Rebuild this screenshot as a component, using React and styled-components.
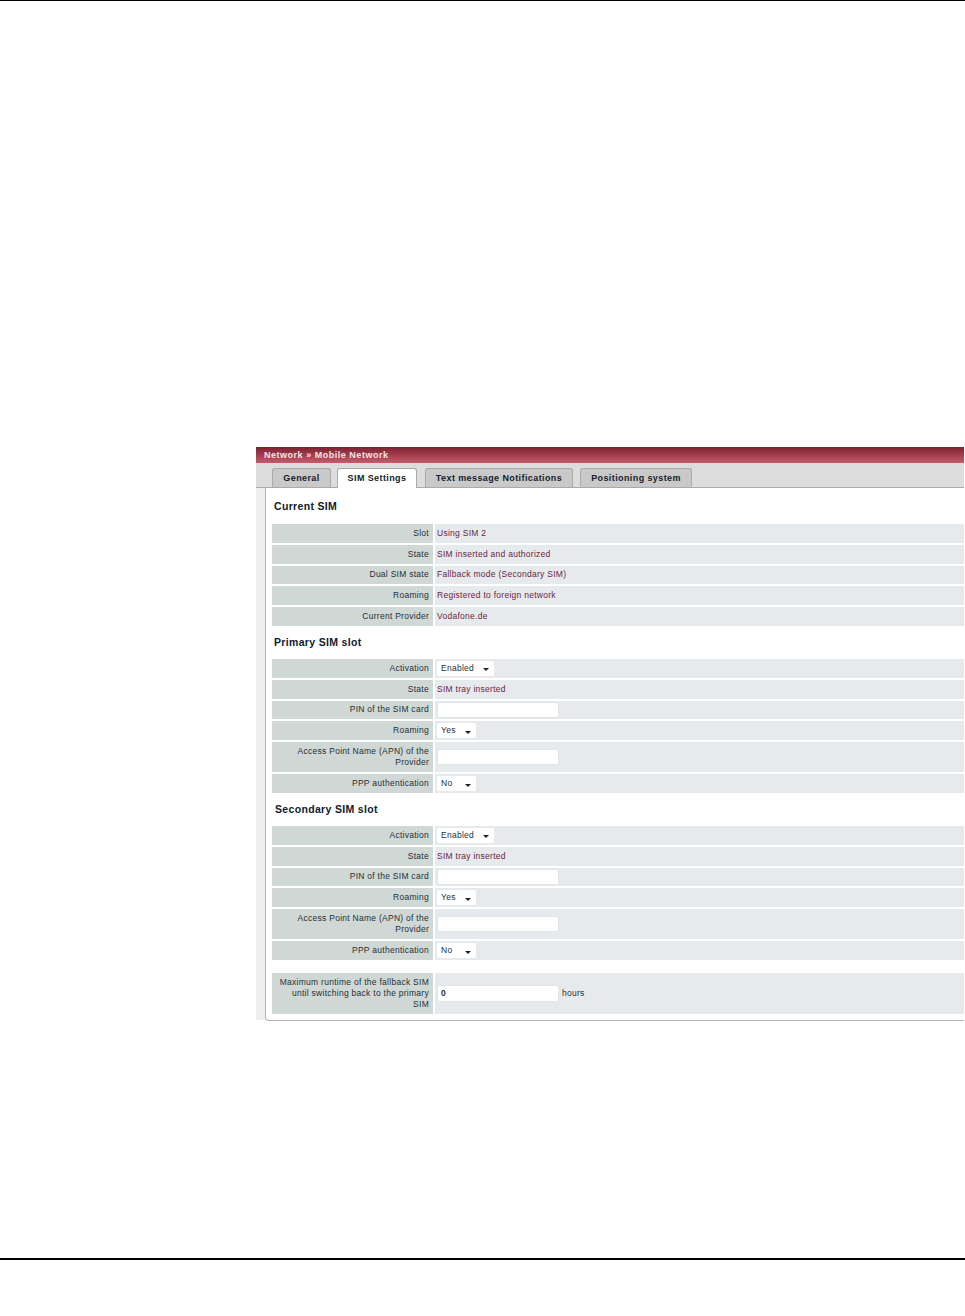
import styled, { createGlobalStyle } from "styled-components";

const GlobalStyle = createGlobalStyle`
  html, body {
    margin: 0;
    padding: 0;
    background: #ffffff;
  }
`;

const currentSim = [
  ["Slot", "Using SIM 2"],
  ["State", "SIM inserted and authorized"],
  ["Dual SIM state", "Fallback mode (Secondary SIM)"],
  ["Roaming", "Registered to foreign network"],
  ["Current Provider", "Vodafone.de"],
];

function SimSlot() {
  return (
    <Rows>
      <Row>
        <Label>Activation</Label>
        <Value><Select $width={57}>Enabled<Arrow /></Select></Value>
      </Row>
      <Row>
        <Label>State</Label>
        <Value>SIM tray inserted</Value>
      </Row>
      <Row>
        <Label>PIN of the SIM card</Label>
        <Value><Input /></Value>
      </Row>
      <Row>
        <Label>Roaming</Label>
        <Value><Select $width={39}>Yes<Arrow /></Select></Value>
      </Row>
      <Row $tall={30}>
        <Label>Access Point Name (APN) of the Provider</Label>
        <Value><Input /></Value>
      </Row>
      <Row>
        <Label>PPP authentication</Label>
        <Value><Select $width={39}>No<Arrow /></Select></Value>
      </Row>
    </Rows>
  );
}

function App() {
  return (
    <Page>
      <GlobalStyle />
      <Panel>
        <TitleBar>Network » Mobile Network</TitleBar>
        <TabStrip>
          <Tab $width={59} $left={0}>General</Tab>
          <Tab $width={80} $left={6} $active>SIM Settings</Tab>
          <Tab $width={148} $left={8}>Text message Notifications</Tab>
          <Tab $width={112} $left={7}>Positioning system</Tab>
        </TabStrip>
        <Body>
          <Content>
            <Heading>Current SIM</Heading>
            <Rows>
              {currentSim.map(([label, value]) => (
                <Row key={label}>
                  <Label>{label}</Label>
                  <Value>{value}</Value>
                </Row>
              ))}
            </Rows>
            <Heading $h={33}>Primary SIM slot</Heading>
            <SimSlot />
            <Heading $h={33} $indent={3}>Secondary SIM slot</Heading>
            <SimSlot />
            <FallbackRow $tall={41}>
              <Label>Maximum runtime of the fallback SIM until switching back to the primary SIM</Label>
              <Value>
                <Input $filled defaultValue="0" />
                <Unit>hours</Unit>
              </Value>
            </FallbackRow>
          </Content>
        </Body>
      </Panel>
    </Page>
  );
}

export default App;

const Page = styled.div`
  box-sizing: border-box;
  height: 1316px;
  padding: 446px 1px 0 256px;
  border-top: 1px solid #000000;
  font-family: "Liberation Sans", Arial, sans-serif;
  overflow: hidden;
  position: relative;
  &::after {
    content: "";
    position: absolute;
    left: 0;
    right: 0;
    top: 1257px;
    height: 2px;
    background: #000000;
  }
`;

const Panel = styled.div`
  width: 708px;
`;

const TitleBar = styled.div`
  height: 16px;
  line-height: 16px;
  padding-left: 8px;
  background: linear-gradient(#7c2030, #c65c6c);
  color: #f4e4e4;
  font-size: 9px;
  font-weight: bold;
  letter-spacing: 0.52px;
`;

const TabStrip = styled.div`
  display: flex;
  align-items: flex-end;
  height: 25px;
  box-sizing: border-box;
  padding-left: 16px;
  background: #dddddd;
  border-bottom: 1px solid #aaaaaa;
`;

const Tab = styled.div`
  box-sizing: border-box;
  width: ${(p) => p.$width}px;
  height: ${(p) => (p.$active ? 20 : 19)}px;
  margin-left: ${(p) => p.$left}px;
  margin-bottom: ${(p) => (p.$active ? -1 : 0)}px;
  border: 1px solid #aaaaaa;
  border-bottom: none;
  border-radius: 3px 3px 0 0;
  background: ${(p) => (p.$active ? "#ffffff" : "#c9c9c9")};
  color: #15222a;
  font-size: 9px;
  font-weight: bold;
  letter-spacing: 0.4px;
  line-height: 18px;
  text-align: center;
  white-space: nowrap;
`;

const Body = styled.div`
  padding-left: 9px;
  background: linear-gradient(#efefef, #efefef) left top / 9px 532px no-repeat;
`;

const Content = styled.div`
  box-sizing: border-box;
  height: 533px;
  padding-left: 6px;
  background: #ffffff;
  border-left: 1px solid #b5b5b5;
  border-bottom: 1px solid #b5b5b5;
  border-bottom-left-radius: 4px;
`;

const Heading = styled.div`
  height: ${(p) => p.$h || 36}px;
  line-height: ${(p) => p.$h || 36}px;
  padding-left: ${(p) => p.$indent || 2}px;
  color: #10202a;
  font-size: 10.5px;
  font-weight: bold;
  letter-spacing: 0.33px;
`;

const Rows = styled.div`
  display: flex;
  flex-direction: column;
  gap: 2px;
`;

const Row = styled.div`
  display: grid;
  grid-template-columns: 161px 1fr;
  column-gap: 2px;
  height: ${(p) => p.$tall || 18.8}px;
  font-size: 8.5px;
  letter-spacing: 0.27px;
  line-height: 11px;
`;

const FallbackRow = styled(Row)`
  margin-top: 13px;
`;

const Label = styled.div`
  display: flex;
  align-items: center;
  justify-content: flex-end;
  padding: 0 4px 0 2px;
  background: #d0d8d6;
  color: #252f33;
  text-align: right;
`;

const Value = styled.div`
  display: flex;
  align-items: center;
  padding-left: 2px;
  background: #e7eaed;
  color: #6a1f3c;
`;

const Select = styled.div`
  box-sizing: border-box;
  display: flex;
  align-items: center;
  justify-content: space-between;
  width: ${(p) => p.$width}px;
  height: 15px;
  padding: 0 5px 0 4px;
  background: #ffffff;
  border-radius: 2px;
  color: #252f33;
`;

const Arrow = styled.span`
  width: 0;
  height: 0;
  margin-top: 3px;
  border-left: 3px solid transparent;
  border-right: 3px solid transparent;
  border-top: 3px solid #222222;
`;

const Input = styled.input`
  box-sizing: border-box;
  width: 122px;
  height: ${(p) => (p.$filled ? 17 : 16)}px;
  padding: 0 3px;
  background: #ffffff;
  border: 1px solid #e2e5e6;
  border-radius: 2px;
  outline: none;
  color: #252f33;
  font-family: inherit;
  font-size: 8.5px;
  font-weight: bold;
`;

const Unit = styled.span`
  margin-left: 3px;
  color: #252f33;
`;
